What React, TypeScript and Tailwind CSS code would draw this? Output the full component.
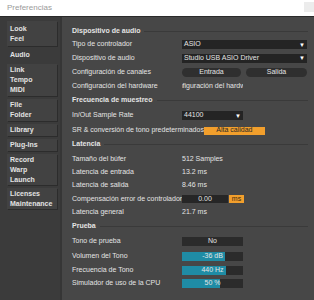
import React from "react";

const font = { fontFamily: '"Liberation Sans", Arial, sans-serif' };

function Tab({ lines, boxed = true, h }: { lines: string[]; boxed?: boolean; h: string }) {
  return (
    <div
      className={`${h} flex flex-col justify-center pl-[3px] text-[7px] font-bold leading-[10px] text-[#e2e2e2] ${
        boxed ? "bg-[#424242] shadow-[1px_1px_0_#2c2c2c]" : ""
      }`}
    >
      {lines.map((l) => (
        <span key={l}>{l}</span>
      ))}
    </div>
  );
}

function Header({ title, h }: { title: string; h: string }) {
  return (
    <div className={`${h} flex items-center gap-[4px] font-bold`}>
      <span className="whitespace-nowrap">{title}</span>
      <div className="mr-[8px] h-px flex-1 bg-[#3a3a3a]" />
    </div>
  );
}

function Row({ label, h, children }: { label: string; h: string; children?: React.ReactNode }) {
  return (
    <div className={`${h} flex items-center`}>
      <span className="w-[110px] shrink-0 whitespace-nowrap">{label}</span>
      {children}
    </div>
  );
}

function Dropdown({ value, w }: { value: string; w: string }) {
  return (
    <div className={`${w} flex h-[9px] items-center justify-between bg-[#242424] pl-[2px] pr-[2px]`}>
      <span>{value}</span>
      <span className="text-[6px] leading-none text-white">▼</span>
    </div>
  );
}

function Slider({ value, pct }: { value: string; pct: number }) {
  return (
    <div className="relative flex h-[9px] w-[61px] items-center justify-center bg-[#2b2b2b]">
      <div className="absolute left-0 top-0 h-full bg-[#1f8ca5]" style={{ width: `${pct}%` }} />
      <span className="relative">{value}</span>
    </div>
  );
}

export default function App() {
  return (
    <div className="flex h-[300px] w-[314px] flex-col overflow-hidden bg-[#474747]" style={font}>
      <div className="flex h-[17px] shrink-0 items-center justify-between border-b border-[#2a2a2a] bg-white pl-[7px]">
        <span className="text-[8px] text-[#9a9a9a]">Preferencias</span>
        <div className="mt-[-2px] h-[10px] w-[10px] bg-[#ececec]" />
      </div>
      <div className="flex flex-1">
        <div className="flex w-[62px] shrink-0 flex-col gap-[3px] border-r-2 border-[#363636] bg-[#3b3b3b] pl-[7px] pr-[3px] pt-[4px]">
          <Tab h="h-[25px]" lines={["Look", "Feel"]} />
          <Tab h="h-[12px]" boxed={false} lines={["Audio"]} />
          <Tab h="h-[32px]" lines={["Link", "Tempo", "MIDI"]} />
          <Tab h="h-[22px]" lines={["File", "Folder"]} />
          <Tab h="h-[12px]" lines={["Library"]} />
          <Tab h="h-[12px]" lines={["Plug-Ins"]} />
          <Tab h="h-[31px]" lines={["Record", "Warp", "Launch"]} />
          <Tab h="h-[21px]" lines={["Licenses", "Maintenance"]} />
        </div>
        <div className="flex-1 pl-[10px] pt-[7px] text-[7px] text-[#e4e4e4]">
          <Header h="h-[14px]" title="Dispositivo de audio" />
          <Row h="h-[13px]" label="Tipo de controlador">
            <Dropdown value="ASIO" w="w-[125px]" />
          </Row>
          <Row h="h-[14px]" label="Dispositivo de audio">
            <Dropdown value="Studio USB ASIO Driver" w="w-[125px]" />
          </Row>
          <Row h="h-[14px]" label="Configuración de canales">
            <div className="flex gap-[5px]">
              <div className="flex h-[9px] w-[59px] items-center justify-center rounded-full bg-[#2f2f2f]">Entrada</div>
              <div className="flex h-[9px] w-[61px] items-center justify-center rounded-full bg-[#2f2f2f]">Salida</div>
            </div>
          </Row>
          <Row h="h-[14px]" label="Configuración del hardware">
            <div className="flex h-[9px] w-[61px] items-center justify-center overflow-hidden whitespace-nowrap">
              <span className="shrink-0">Configuración del hardware</span>
            </div>
          </Row>
          <Header h="h-[14px]" title="Frecuencia de muestreo" />
          <Row h="h-[17px]" label="In/Out Sample Rate">
            <Dropdown value="44100" w="w-[61px]" />
          </Row>
          <div className="flex h-[13px] items-center">
            <span className="whitespace-nowrap">SR &amp; conversión de tono predeterminados</span>
            <div className="ml-auto mr-[51px] flex h-[8px] w-[61px] items-center justify-center bg-[#f29f2c] text-[#2a2a2a]">
              Alta calidad
            </div>
          </div>
          <Header h="h-[15px]" title="Latencia" />
          <Row h="h-[14px]" label="Tamaño del búfer">
            <span>512 Samples</span>
          </Row>
          <Row h="h-[13px]" label="Latencia de entrada">
            <span>13.2 ms</span>
          </Row>
          <Row h="h-[13px]" label="Latencia de salida">
            <span>8.46 ms</span>
          </Row>
          <Row h="h-[14px]" label="Compensación error de controlador">
            <div className="flex h-[8px] w-[46px] items-center justify-center bg-[#262626]">0.00</div>
            <div className="ml-[1px] flex h-[8px] w-[15px] items-center justify-center bg-[#f29f2c] text-[#3a2a10]">ms</div>
          </Row>
          <Row h="h-[13px]" label="Latencia general">
            <span>21.7 ms</span>
          </Row>
          <Header h="h-[15px]" title="Prueba" />
          <Row h="h-[15px]" label="Tono de prueba">
            <div className="flex h-[9px] w-[61px] items-center justify-center bg-[#2b2b2b]">No</div>
          </Row>
          <Row h="h-[14px]" label="Volumen del Tono">
            <Slider value="-36 dB" pct={70} />
          </Row>
          <Row h="h-[14px]" label="Frecuencia de Tono">
            <Slider value="440 Hz" pct={72} />
          </Row>
          <Row h="h-[13px]" label="Simulador de uso de la CPU">
            <Slider value="50 %" pct={63} />
          </Row>
        </div>
      </div>
    </div>
  );
}
